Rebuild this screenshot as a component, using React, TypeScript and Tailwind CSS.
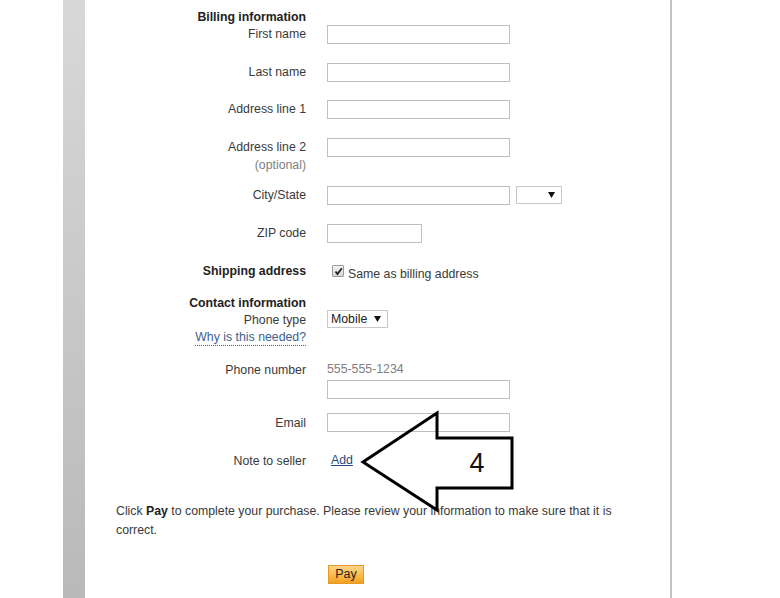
import React from "react";

const Input = ({ w = "w-[183px]" }: { w?: string }) => (
  <div className={`${w} h-[19px] border border-[#b9c0c7] bg-white`} />
);

const Row = ({
  label,
  h,
  children,
  bold,
}: {
  label: React.ReactNode;
  h: string;
  children?: React.ReactNode;
  bold?: boolean;
}) => (
  <div className={`flex ${h}`}>
    <div
      className={`w-[221px] shrink-0 pt-[1px] text-right leading-[16px] ${
        bold ? "font-bold text-[#222]" : "text-[#3a3a3a]"
      }`}
    >
      {label}
    </div>
    <div className="ml-[21px]">{children}</div>
  </div>
);

const Caret = () => (
  <svg width="7" height="6" viewBox="0 0 7 6" className="inline-block">
    <path d="M0 0 L7 0 L3.5 6 Z" fill="#111" />
  </svg>
);

export default function App() {
  return (
    <div
      className="relative flex h-[598px] w-[780px] overflow-hidden bg-white text-[12.3px]"
      style={{ fontFamily: "'Liberation Sans', Arial, sans-serif" }}
    >
      <div className="w-[63px] shrink-0" />
      <div className="w-[22px] shrink-0 bg-gradient-to-b from-[#d8d8d8] to-[#b9b9b9]" />
      <div className="w-[585px] shrink-0 pt-[7px]">
        <div className="flex h-[18px]">
          <div className="w-[221px] pt-[1px] text-right font-bold leading-[18px] text-[#222]">
            Billing information
          </div>
        </div>
        <Row label="First name" h="h-[38px]">
          <Input />
        </Row>
        <Row label="Last name" h="h-[37px]">
          <Input />
        </Row>
        <Row label="Address line 1" h="h-[38px]">
          <Input />
        </Row>
        <Row
          label={
            <>
              <div>Address line 2</div>
              <div className="mt-[2px] text-[#808080]">(optional)</div>
            </>
          }
          h="h-[48px]"
        >
          <Input />
        </Row>
        <Row label="City/State" h="h-[38px]">
          <div className="flex items-start gap-[6px]">
            <Input />
            <div className="flex h-[18px] w-[46px] items-center justify-end border border-[#c8c8c8] bg-white pr-[6px]">
              <Caret />
            </div>
          </div>
        </Row>
        <Row label="ZIP code" h="h-[38px]">
          <Input w="w-[95px]" />
        </Row>
        <Row label="Shipping address" h="h-[32px]" bold>
          <div className="mt-[3px] flex items-start">
            <div className="ml-[5px] flex h-[12px] w-[12px] items-center justify-center rounded-[1px] border border-[#9a9a9a] bg-gradient-to-b from-[#f4f4f4] to-[#d6d6d6]">
              <svg width="9" height="9" viewBox="0 0 9 9">
                <path d="M1.5 4.5 L3.5 7 L7.8 1.2" fill="none" stroke="#222" strokeWidth="1.8" />
              </svg>
            </div>
            <span className="ml-[4px] mt-[1px] leading-[16px] text-[#3a3a3a]">
              Same as billing address
            </span>
          </div>
        </Row>
        <div className="flex h-[67px]">
          <div className="w-[221px] shrink-0 pt-[1px] text-right leading-[16px]">
            <div className="font-bold text-[#222]">Contact information</div>
            <div className="mt-[1px] text-[#3a3a3a]">Phone type</div>
            <div className="mt-[1px] flex justify-end">
              <span className="border-b border-dotted border-[#3e5f8e] leading-[16px] text-[#3e5f8e]">
                Why is this needed?
              </span>
            </div>
          </div>
          <div className="ml-[21px] pt-[16px]">
            <div className="flex h-[18px] w-[61px] items-center justify-between border border-[#c8c8c8] bg-white pl-[3px] pr-[6px] text-[#222]">
              <span>Mobile</span>
              <Caret />
            </div>
          </div>
        </div>
        <Row label="Phone number" h="h-[52px]">
          <div className="leading-[16px] text-[#808080]">555-555-1234</div>
          <div className="mt-[3px]">
            <Input />
          </div>
        </Row>
        <Row label={<div className="mt-[1px]">Email</div>} h="h-[39px]">
          <Input />
        </Row>
        <Row label="Note to seller" h="h-[16px]">
          <a className="ml-[4px] block leading-[16px] text-[#1f4d80] underline">Add</a>
        </Row>
        <p className="ml-[31px] mt-[34px] w-[530px] leading-[19px] text-[#3a3a3a]">
          Click <b className="text-[#222]">Pay</b> to complete your purchase. Please review your
          information to make sure that it is correct.
        </p>
        <div className="ml-[243px] mt-[25px]">
          <button className="flex h-[19px] w-[36px] items-center justify-center border border-[#e49a2a] bg-gradient-to-b from-[#fdd488] via-[#fbbd4e] to-[#f5a01e] text-[12.5px] leading-none text-[#222]">
            Pay
          </button>
        </div>
      </div>
      <div className="w-[2px] shrink-0 bg-[#c3c3c3]" />
      <div className="flex-1" />

      <svg
        className="pointer-events-none absolute left-[355px] top-[405px]"
        width="165"
        height="115"
        viewBox="355 405 165 115"
      >
        <polygon
          points="363,462 437,413 437,438 512,438 512,488 437,488 437,510"
          fill="none"
          stroke="#000"
          strokeWidth="3"
          strokeLinejoin="miter"
        />
        <text
          x="477"
          y="472"
          textAnchor="middle"
          fontSize="27"
          fontFamily="'Liberation Sans', Arial, sans-serif"
          fill="#111"
        >
          4
        </text>
      </svg>
    </div>
  );
}
